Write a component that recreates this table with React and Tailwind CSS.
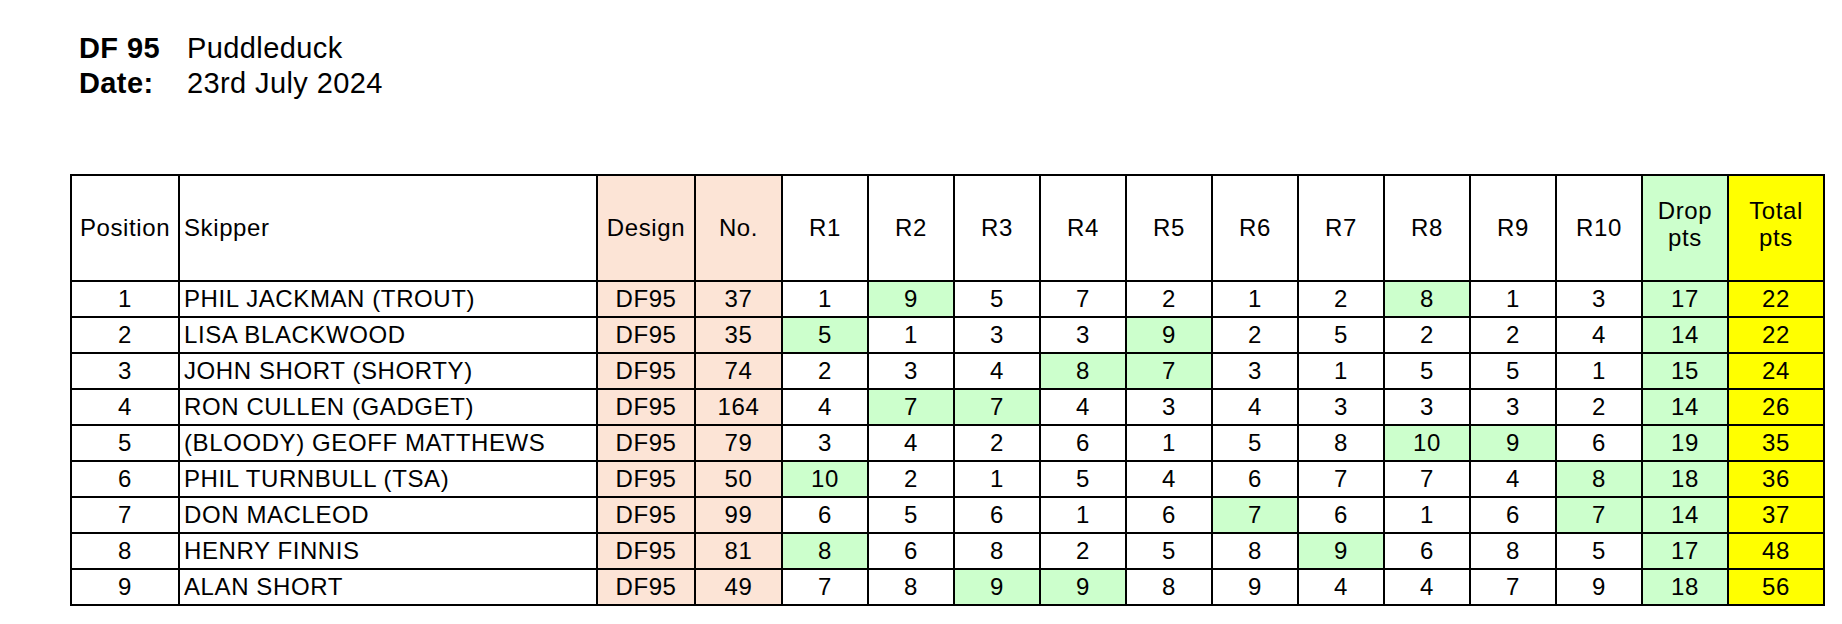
import React from "react";

// --- Race data ---
const results = [
  { pos: 1, name: "PHIL JACKMAN (TROUT)", no: 37, races: [1, 9, 5, 7, 2, 1, 2, 8, 1, 3], drops: [1, 7], drop: 17, total: 22 },
  { pos: 2, name: "LISA BLACKWOOD", no: 35, races: [5, 1, 3, 3, 9, 2, 5, 2, 2, 4], drops: [0, 4], drop: 14, total: 22 },
  { pos: 3, name: "JOHN SHORT (SHORTY)", no: 74, races: [2, 3, 4, 8, 7, 3, 1, 5, 5, 1], drops: [3, 4], drop: 15, total: 24 },
  { pos: 4, name: "RON CULLEN (GADGET)", no: 164, races: [4, 7, 7, 4, 3, 4, 3, 3, 3, 2], drops: [1, 2], drop: 14, total: 26 },
  { pos: 5, name: "(BLOODY) GEOFF MATTHEWS", no: 79, races: [3, 4, 2, 6, 1, 5, 8, 10, 9, 6], drops: [7, 8], drop: 19, total: 35 },
  { pos: 6, name: "PHIL TURNBULL (TSA)", no: 50, races: [10, 2, 1, 5, 4, 6, 7, 7, 4, 8], drops: [0, 9], drop: 18, total: 36 },
  { pos: 7, name: "DON MACLEOD", no: 99, races: [6, 5, 6, 1, 6, 7, 6, 1, 6, 7], drops: [5, 9], drop: 14, total: 37 },
  { pos: 8, name: "HENRY FINNIS", no: 81, races: [8, 6, 8, 2, 5, 8, 9, 6, 8, 5], drops: [0, 6], drop: 17, total: 48 },
  { pos: 9, name: "ALAN SHORT", no: 49, races: [7, 8, 9, 9, 8, 9, 4, 4, 7, 9], drops: [2, 3], drop: 18, total: 56 },
];

const raceCols = ["R1", "R2", "R3", "R4", "R5", "R6", "R7", "R8", "R9", "R10"];

const cell = "flex items-center justify-center";
const peach = "bg-[#fce4d6]";
const green = "bg-[#ccffcc]";
const yellow = "bg-[#ffff00]";

// --- Results Table ---
const ResultsTable = () => {
  return (
    <div className="w-max border-2 border-black bg-black text-[24px] tracking-[0.6px] text-black">
      <div className="grid grid-cols-[106px_416px_96px_85px_repeat(10,84px)_84px_94px] grid-rows-[104px_repeat(9,34px)] gap-[2px]">
        {/* Header */}
        <div className={`${cell} bg-white`}>Position</div>
        <div className="flex items-center bg-white pl-1">Skipper</div>
        <div className={`${cell} ${peach}`}>Design</div>
        <div className={`${cell} ${peach}`}>No.</div>
        {raceCols.map((r) => (
          <div key={r} className={`${cell} bg-white`}>
            {r}
          </div>
        ))}
        <div className={`${cell} ${green} flex-col leading-[27px] pb-2`}>
          <span>Drop</span>
          <span>pts</span>
        </div>
        <div className={`${cell} ${yellow} flex-col leading-[27px] pb-2`}>
          <span>Total</span>
          <span>pts</span>
        </div>

        {/* Rows */}
        {results.map((row) => (
          <React.Fragment key={row.pos}>
            <div className={`${cell} bg-white`}>{row.pos}</div>
            <div className="flex items-center bg-white pl-1">{row.name}</div>
            <div className={`${cell} ${peach}`}>DF95</div>
            <div className={`${cell} ${peach}`}>{row.no}</div>
            {row.races.map((v, i) => (
              <div
                key={i}
                className={`${cell} ${row.drops.includes(i) ? green : "bg-white"}`}
              >
                {v}
              </div>
            ))}
            <div className={`${cell} ${green}`}>{row.drop}</div>
            <div className={`${cell} ${yellow}`}>{row.total}</div>
          </React.Fragment>
        ))}
      </div>
    </div>
  );
};

// --- Page ---
const App = () => {
  return (
    <div
      className="min-h-screen bg-white pl-[70px] pt-[31px]"
      style={{ fontFamily: '"Liberation Sans", Arial, sans-serif' }}
    >
      <div className="ml-[9px] text-[29px] leading-[35px] tracking-[0.4px] text-black">
        <div className="flex">
          <span className="w-[108px] font-bold">DF 95</span>
          <span>Puddleduck</span>
        </div>
        <div className="flex">
          <span className="w-[108px] font-bold">Date:</span>
          <span>23rd July 2024</span>
        </div>
      </div>

      <div className="mt-[73px]">
        <ResultsTable />
      </div>
    </div>
  );
};

export default App;
